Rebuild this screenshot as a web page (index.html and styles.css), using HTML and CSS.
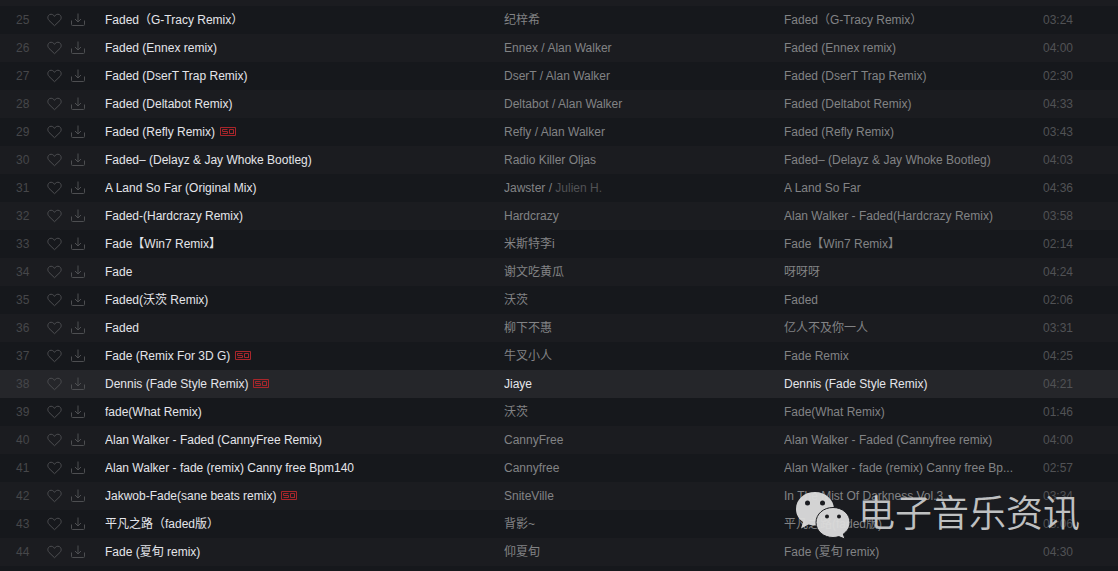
FILE: index.html
```html
<!DOCTYPE html>
<html lang="zh-CN">
<head>
  <meta charset="UTF-8">
  <title>Faded</title>
  <link rel="stylesheet" href="styles.css">
</head>
<body>

  <!-- shared icons -->
  <svg class="sprite" aria-hidden="true">
    <symbol id="heart" viewBox="0 0 16 14">
      <path d="M7.500 12.700 2 7.400C0 5.200.8 2.400 2.800 1.500c1.800-.7 3.700.1 4.700 1.900C8.500 1.600 10.400.8 12.200 1.500c2 .9 2.800 3.700.8 5.900z"/>
    </symbol>
    <symbol id="download" viewBox="0 0 14 14">
      <path d="M.5 7.500v4q0 1 1 1h11q1 0 1-1v-4M7 .5v8M4 6l3 3 3-3"/>
    </symbol>
    <symbol id="sq" viewBox="0 0 16 9">
      <path d="M.5.5h15v8H.5zM7.500 2.500h-5v2h5v2h-5M13.500 7v-4.500h-4v4h4"/>
    </symbol>
  </svg>

  <main class="list">
    <table class="tracks">
      <colgroup>
        <col class="c-num">
        <col class="c-ops">
        <col class="c-title">
        <col class="c-artist">
        <col class="c-album">
        <col class="c-time">
      </colgroup>
      <tbody>
        <tr>
          <td class="num">25</td>
          <td class="ops"><button aria-label="喜欢"><svg class="heart"><use href="#heart"/></svg></button><button aria-label="下载"><svg class="down"><use href="#download"/></svg></button></td>
          <td class="title">Faded（G-Tracy Remix）</td>
          <td><a href="#">纪梓希</a></td>
          <td><a href="#">Faded（G-Tracy Remix）</a></td>
          <td class="time">03:24</td>
        </tr>
        <tr>
          <td class="num">26</td>
          <td class="ops"><button aria-label="喜欢"><svg class="heart"><use href="#heart"/></svg></button><button aria-label="下载"><svg class="down"><use href="#download"/></svg></button></td>
          <td class="title">Faded (Ennex remix)</td>
          <td><a href="#">Ennex</a> / <a href="#">Alan Walker</a></td>
          <td><a href="#">Faded (Ennex remix)</a></td>
          <td class="time">04:00</td>
        </tr>
        <tr>
          <td class="num">27</td>
          <td class="ops"><button aria-label="喜欢"><svg class="heart"><use href="#heart"/></svg></button><button aria-label="下载"><svg class="down"><use href="#download"/></svg></button></td>
          <td class="title">Faded (DserT Trap Remix)</td>
          <td><a href="#">DserT</a> / <a href="#">Alan Walker</a></td>
          <td><a href="#">Faded (DserT Trap Remix)</a></td>
          <td class="time">02:30</td>
        </tr>
        <tr>
          <td class="num">28</td>
          <td class="ops"><button aria-label="喜欢"><svg class="heart"><use href="#heart"/></svg></button><button aria-label="下载"><svg class="down"><use href="#download"/></svg></button></td>
          <td class="title">Faded (Deltabot Remix)</td>
          <td><a href="#">Deltabot</a> / <a href="#">Alan Walker</a></td>
          <td><a href="#">Faded (Deltabot Remix)</a></td>
          <td class="time">04:33</td>
        </tr>
        <tr>
          <td class="num">29</td>
          <td class="ops"><button aria-label="喜欢"><svg class="heart"><use href="#heart"/></svg></button><button aria-label="下载"><svg class="down"><use href="#download"/></svg></button></td>
          <td class="title">Faded (Refly Remix)<svg class="sq"><use href="#sq"/></svg></td>
          <td><a href="#">Refly</a> / <a href="#">Alan Walker</a></td>
          <td><a href="#">Faded (Refly Remix)</a></td>
          <td class="time">03:43</td>
        </tr>
        <tr>
          <td class="num">30</td>
          <td class="ops"><button aria-label="喜欢"><svg class="heart"><use href="#heart"/></svg></button><button aria-label="下载"><svg class="down"><use href="#download"/></svg></button></td>
          <td class="title">Faded– (Delayz &amp; Jay Whoke Bootleg)</td>
          <td><a href="#">Radio Killer Oljas</a></td>
          <td><a href="#">Faded– (Delayz &amp; Jay Whoke Bootleg)</a></td>
          <td class="time">04:03</td>
        </tr>
        <tr>
          <td class="num">31</td>
          <td class="ops"><button aria-label="喜欢"><svg class="heart"><use href="#heart"/></svg></button><button aria-label="下载"><svg class="down"><use href="#download"/></svg></button></td>
          <td class="title">A Land So Far (Original Mix)</td>
          <td><a href="#">Jawster</a> / <span class="unlisted">Julien H.</span></td>
          <td><a href="#">A Land So Far</a></td>
          <td class="time">04:36</td>
        </tr>
        <tr>
          <td class="num">32</td>
          <td class="ops"><button aria-label="喜欢"><svg class="heart"><use href="#heart"/></svg></button><button aria-label="下载"><svg class="down"><use href="#download"/></svg></button></td>
          <td class="title">Faded-(Hardcrazy Remix)</td>
          <td><a href="#">Hardcrazy</a></td>
          <td><a href="#">Alan Walker - Faded(Hardcrazy Remix)</a></td>
          <td class="time">03:58</td>
        </tr>
        <tr>
          <td class="num">33</td>
          <td class="ops"><button aria-label="喜欢"><svg class="heart"><use href="#heart"/></svg></button><button aria-label="下载"><svg class="down"><use href="#download"/></svg></button></td>
          <td class="title">Fade【Win7 Remix】</td>
          <td><a href="#">米斯特李i</a></td>
          <td><a href="#">Fade【Win7 Remix】</a></td>
          <td class="time">02:14</td>
        </tr>
        <tr>
          <td class="num">34</td>
          <td class="ops"><button aria-label="喜欢"><svg class="heart"><use href="#heart"/></svg></button><button aria-label="下载"><svg class="down"><use href="#download"/></svg></button></td>
          <td class="title">Fade</td>
          <td><a href="#">谢文吃黄瓜</a></td>
          <td><a href="#">呀呀呀</a></td>
          <td class="time">04:24</td>
        </tr>
        <tr>
          <td class="num">35</td>
          <td class="ops"><button aria-label="喜欢"><svg class="heart"><use href="#heart"/></svg></button><button aria-label="下载"><svg class="down"><use href="#download"/></svg></button></td>
          <td class="title">Faded(沃茨 Remix)</td>
          <td><a href="#">沃茨</a></td>
          <td><a href="#">Faded</a></td>
          <td class="time">02:06</td>
        </tr>
        <tr>
          <td class="num">36</td>
          <td class="ops"><button aria-label="喜欢"><svg class="heart"><use href="#heart"/></svg></button><button aria-label="下载"><svg class="down"><use href="#download"/></svg></button></td>
          <td class="title">Faded</td>
          <td><a href="#">柳下不惠</a></td>
          <td><a href="#">亿人不及你一人</a></td>
          <td class="time">03:31</td>
        </tr>
        <tr>
          <td class="num">37</td>
          <td class="ops"><button aria-label="喜欢"><svg class="heart"><use href="#heart"/></svg></button><button aria-label="下载"><svg class="down"><use href="#download"/></svg></button></td>
          <td class="title">Fade (Remix For 3D G)<svg class="sq"><use href="#sq"/></svg></td>
          <td><a href="#">牛叉小人</a></td>
          <td><a href="#">Fade Remix</a></td>
          <td class="time">04:25</td>
        </tr>
        <tr class="selected">
          <td class="num">38</td>
          <td class="ops"><button aria-label="喜欢"><svg class="heart"><use href="#heart"/></svg></button><button aria-label="下载"><svg class="down"><use href="#download"/></svg></button></td>
          <td class="title">Dennis (Fade Style Remix)<svg class="sq"><use href="#sq"/></svg></td>
          <td><a href="#">Jiaye</a></td>
          <td><a href="#">Dennis (Fade Style Remix)</a></td>
          <td class="time">04:21</td>
        </tr>
        <tr>
          <td class="num">39</td>
          <td class="ops"><button aria-label="喜欢"><svg class="heart"><use href="#heart"/></svg></button><button aria-label="下载"><svg class="down"><use href="#download"/></svg></button></td>
          <td class="title">fade(What Remix)</td>
          <td><a href="#">沃茨</a></td>
          <td><a href="#">Fade(What Remix)</a></td>
          <td class="time">01:46</td>
        </tr>
        <tr>
          <td class="num">40</td>
          <td class="ops"><button aria-label="喜欢"><svg class="heart"><use href="#heart"/></svg></button><button aria-label="下载"><svg class="down"><use href="#download"/></svg></button></td>
          <td class="title">Alan Walker - Faded (CannyFree Remix)</td>
          <td><a href="#">CannyFree</a></td>
          <td><a href="#">Alan Walker - Faded (Cannyfree remix)</a></td>
          <td class="time">04:00</td>
        </tr>
        <tr>
          <td class="num">41</td>
          <td class="ops"><button aria-label="喜欢"><svg class="heart"><use href="#heart"/></svg></button><button aria-label="下载"><svg class="down"><use href="#download"/></svg></button></td>
          <td class="title">Alan Walker - fade (remix) Canny free Bpm140</td>
          <td><a href="#">Cannyfree</a></td>
          <td><a href="#">Alan Walker - fade (remix) Canny free Bp...</a></td>
          <td class="time">02:57</td>
        </tr>
        <tr>
          <td class="num">42</td>
          <td class="ops"><button aria-label="喜欢"><svg class="heart"><use href="#heart"/></svg></button><button aria-label="下载"><svg class="down"><use href="#download"/></svg></button></td>
          <td class="title">Jakwob-Fade(sane beats remix)<svg class="sq"><use href="#sq"/></svg></td>
          <td><a href="#">SniteVille</a></td>
          <td><a href="#">In The Mist Of Darkness Vol.3</a></td>
          <td class="time">03:34</td>
        </tr>
        <tr>
          <td class="num">43</td>
          <td class="ops"><button aria-label="喜欢"><svg class="heart"><use href="#heart"/></svg></button><button aria-label="下载"><svg class="down"><use href="#download"/></svg></button></td>
          <td class="title">平凡之路（faded版）</td>
          <td><a href="#">背影~</a></td>
          <td><a href="#">平凡之路(faded版)</a></td>
          <td class="time">03:06</td>
        </tr>
        <tr>
          <td class="num">44</td>
          <td class="ops"><button aria-label="喜欢"><svg class="heart"><use href="#heart"/></svg></button><button aria-label="下载"><svg class="down"><use href="#download"/></svg></button></td>
          <td class="title">Fade (夏旬 remix)</td>
          <td><a href="#">仰夏旬</a></td>
          <td><a href="#">Fade (夏旬 remix)</a></td>
          <td class="time">04:30</td>
        </tr>
      </tbody>
    </table>
  </main>

  <!-- account watermark, sits over the last rows -->
  <div class="watermark">
    <svg viewBox="0 0 56 48" aria-hidden="true">
      <path d="M20 1C9 1 1 8.500 1 18c0 5.500 2.500 9.800 7 13l-2 6.500 7.500-4c2 .7 4.300 1 6.500 1 11 0 19-7.500 19-16.500S31 1 20 1z"/>
      <path class="front" d="M38 16.500c-9.500 0-17 6.500-17 15s7.500 15 17 15c2 0 4-.3 5.800-.9l6.200 2.400-1.700-5c4-2.700 6.700-6.700 6.700-11.500 0-8.500-7.500-15-17-15z"/>
      <g class="eyes">
        <circle cx="12.500" cy="12" r="2.500"/>
        <circle cx="27.500" cy="12" r="2.500"/>
        <circle cx="32" cy="25.500" r="2"/>
        <circle cx="44" cy="25.500" r="2"/>
      </g>
    </svg>
    <span>电子音乐资讯</span>
  </div>

</body>
</html>
```
FILE: styles.css
```css
html, body {
  margin: 0;
  padding: 0;
  height: 100%;
  overflow: hidden;
}

body {
  position: relative;
  background: #16181c;
  color: #828385;
  font: 12px/28px "Liberation Sans", Arial, "Noto Sans CJK SC", sans-serif;
}

.sprite {
  position: absolute;
  width: 0;
  height: 0;
}

/* top strip belongs to the row scrolled out of view */
.list {
  padding-top: 6px;
  background: #1b1c20;
}

/* track table */
.tracks {
  width: 100%;
  border-collapse: collapse;
  table-layout: fixed;
}

.c-num    { width: 47px; }
.c-ops    { width: 58px; }
.c-artist { width: 280px; }
.c-album  { width: 259px; }
.c-time   { width: 75px; }

.tracks tr {
  height: 28px;
  background: #1b1c20;
}
.tracks tr:nth-child(odd) {
  background: #16181c;
}
.tracks tr.selected {
  background: #25262a;
}

.tracks td {
  height: 28px;
  padding: 0;
  overflow: hidden;
  white-space: nowrap;
  text-overflow: ellipsis;
}

.tracks a {
  color: inherit;
  text-decoration: none;
}

.tracks .num {
  padding-left: 16px;
  color: #46474a;
}

.tracks .title,
.selected a {
  color: #e4e5ea;
}

.tracks .time {
  color: #515255;
}

.unlisted {
  color: #515255;
}

/* icons */
.tracks .ops {
  line-height: 0;
}

.ops button {
  margin: 0 8px 0 0;
  padding: 0;
  border: 0;
  background: none;
  vertical-align: middle;
  line-height: 0;
  cursor: pointer;
}

.tracks svg {
  fill: none;
  stroke: #4d4e51;
}

.heart {
  width: 16px;
  height: 14px;
}

.down {
  width: 14px;
  height: 14px;
}

.tracks .sq {
  width: 16px;
  height: 9px;
  margin-left: 5px;
  stroke: #a8262b;
}

/* watermark */
.watermark {
  position: absolute;
  right: 38px;
  bottom: 32px;
  display: flex;
  align-items: center;
  gap: 7px;
  color: #c8c9ca;
  font-size: 37px;
  line-height: 48px;
  font-weight: 350;
  opacity: 0.95;
}

.watermark svg {
  width: 56px;
  height: 48px;
  fill: #dddddd;
}

.watermark .front {
  stroke: #1b1c20;
}

.watermark .eyes {
  fill: #1b1c20;
}
```
